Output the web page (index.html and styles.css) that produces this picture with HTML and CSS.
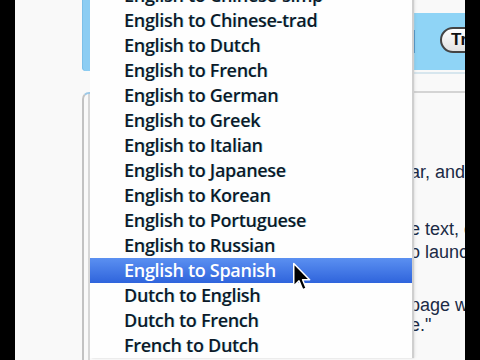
FILE: index.html
```html
<!DOCTYPE html>
<html lang="en">
<head>
  <meta charset="UTF-8" />
  <title>Translate</title>
  <link rel="stylesheet" href="styles.css">
</head>
<body>
  <div class="frame">
    <div class="gutter"></div>

    <div class="side">
      <div class="side-tab"></div>
      <div class="side-panel"></div>
    </div>

    <div class="main">
      <div class="band">
        <div class="field"></div>
        <button class="go">Translate</button>
      </div>
      <div class="rule"></div>
      <div class="rule rule-grey"></div>

      <!-- only the tail of each line shows past the menu -->
      <div class="article">
        <p>ar, and</p>
        <p>e text, c<br>o launch</p>
        <p>page wi<br>e."</p>
      </div>
    </div>

    <ul class="menu">
      <li>English to Chinese-simp</li>
      <li>English to Chinese-trad</li>
      <li>English to Dutch</li>
      <li>English to French</li>
      <li>English to German</li>
      <li>English to Greek</li>
      <li>English to Italian</li>
      <li>English to Japanese</li>
      <li>English to Korean</li>
      <li>English to Portuguese</li>
      <li>English to Russian</li>
      <li class="on">English to Spanish</li>
      <li>Dutch to English</li>
      <li>Dutch to French</li>
      <li>French to Dutch</li>
    </ul>

    <svg class="cursor" width="20" height="30" viewBox="0 0 13 20">
      <path d="M1 1 L1 16 L4.5 12.6 L7 18.5 L9.3 17.5 L6.9 11.8 L11.6 11.8 Z" fill="#000" stroke="#fff" stroke-width="1" stroke-linejoin="round"/>
    </svg>
  </div>
</body>
</html>
```

FILE: styles.css
```css
body {
  margin: 0;
  background: #000;
  width: 480px;
  height: 360px;
  overflow: hidden;
}
.frame {
  position: relative;
  display: flex;
  margin: 0 15px;
  height: 360px;
  background: #f9f9f9;
  overflow: hidden;
  font-family: "Liberation Sans", Arial, sans-serif;
}
.gutter {
  width: 67px;
  flex: none;
}
.side {
  width: 8px;
  flex: none;
  display: flex;
  flex-direction: column;
}
.side-tab {
  height: 71px;
  background: #8ccdf3;
  border-bottom-left-radius: 4px;
  box-shadow: inset 1px 0 0 #7cbfe8;
}
.side-panel {
  margin-top: 21px;
  flex: 1;
  border-left: 2px solid #c2c2c2;
  border-top: 2px solid #9cc8e6;
  border-top-left-radius: 7px;
  box-shadow: inset -2px 0 0 #d6d6d6;
}
.main {
  flex: 1;
  display: flex;
  flex-direction: column;
}
.band {
  margin-top: 13px;
  height: 57px;
  background: #8fd4f6;
  display: flex;
  align-items: center;
  padding-left: 20px;
  gap: 25px;
}
.field {
  width: 303px;
  height: 23px;
  background: #ecf6fb;
  border-right: 2px solid #3f8fc8;
}
.go {
  flex: none;
  height: 26px;
  padding: 0 12px 0 9px;
  border: 2px solid #444;
  border-radius: 13px;
  background: linear-gradient(#ffffff, #e2e2e2);
  font-family: "Liberation Sans", Arial, sans-serif;
  font-weight: bold;
  font-size: 17px;
  color: #111;
  margin-top: -3px;
}
.rule {
  height: 2px;
  margin-top: 2px;
  background: #d7e6ee;
}
.rule-grey {
  margin-top: 17px;
  background: #d4d4d4;
}
.article {
  padding-left: 320px;
  color: #1b2a45;
  font-size: 18px;
  white-space: nowrap;
}
.article p {
  margin: 35px 0 0;
  line-height: 23px;
}
.article p:first-child {
  margin-top: 68px;
  line-height: 22px;
}
.article p:last-child {
  margin-top: 31px;
  line-height: 20px;
}

.menu {
  position: absolute;
  left: 75px;
  top: -17px;
  width: 322px;
  margin: 0;
  padding: 0;
  list-style: none;
  background: #fefefe;
  box-shadow: 2px 0 1px #cfcfcf, 3px 0 3px rgba(0, 0, 0, 0.08);
  font-family: "Open Sans", sans-serif;
  font-weight: 600;
  font-size: 18px;
  letter-spacing: -0.3px;
  color: #0c1a28;
}
.menu li {
  height: 25px;
  line-height: 25px;
  padding-left: 34px;
  text-shadow: 1px 0 0 rgba(40, 170, 210, 0.25);
}
.menu li.on {
  background: linear-gradient(#5b90f1, #2f64dc);
  color: #fff;
  text-shadow: none;
}
.cursor {
  position: absolute;
  left: 277px;
  top: 262px;
}
```
